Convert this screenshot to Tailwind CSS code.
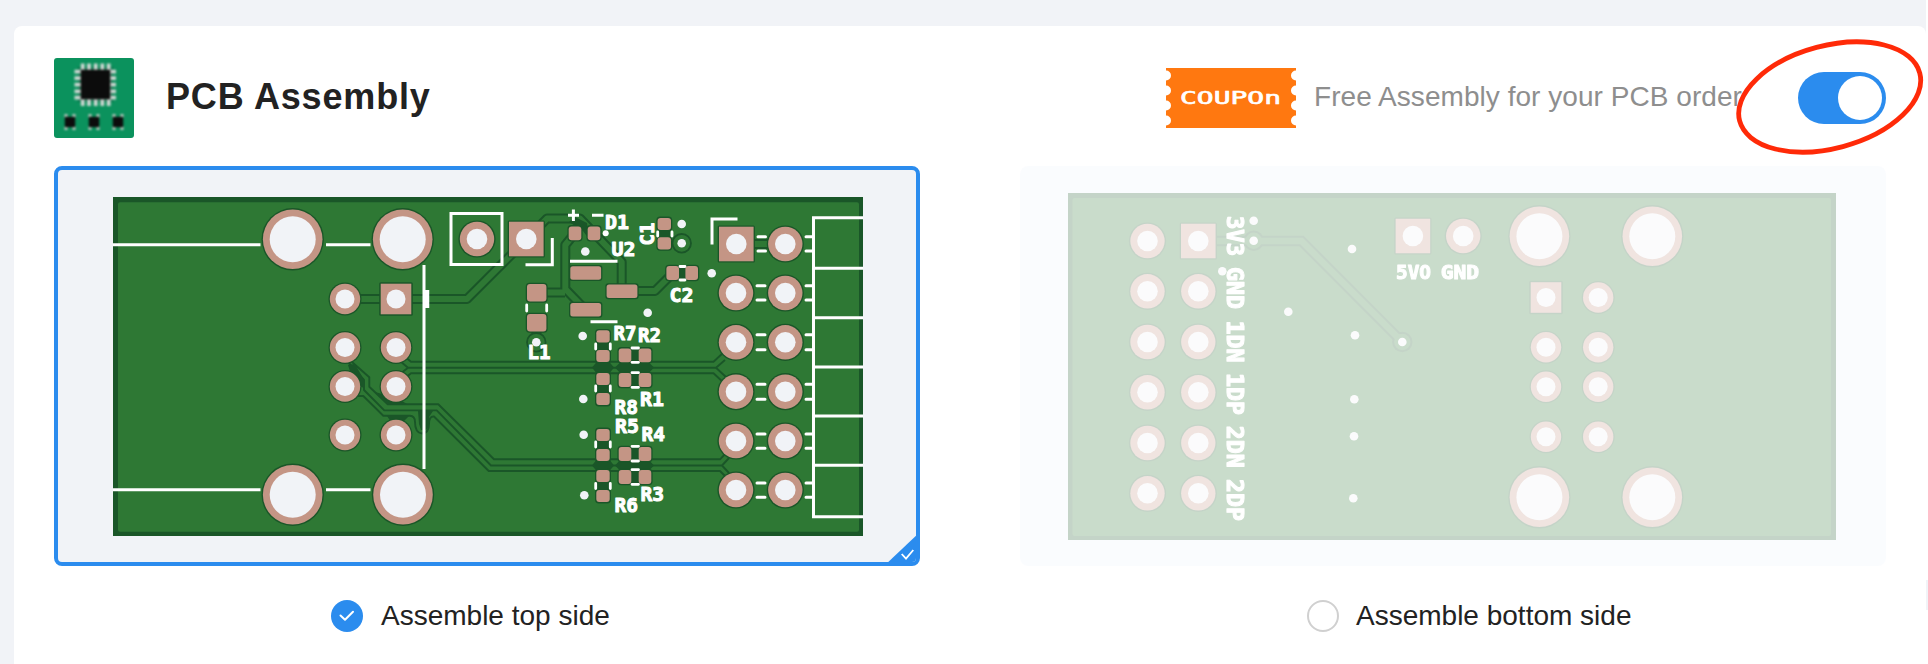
<!DOCTYPE html>
<html lang="en">
<head>
<meta charset="utf-8">
<title>PCB Assembly</title>
<script src="https://cdn.jsdelivr.net/npm/@tailwindcss/browser@4"></script>
</head>
<body class="relative h-[664px] overflow-hidden bg-[#f1f3f7] pt-[26px] pr-[2px] pl-[14px] font-['Liberation_Sans',Arial,sans-serif] text-[#222]">
<svg class="absolute size-0" aria-hidden="true">
  <defs>
    <g id="big"><circle r="31.2" fill="#1a5628"/><circle r="29.8" fill="#c49585"/><circle r="23" fill="#f1f3f7"/></g>
    <g id="mid"><circle r="18.6" fill="#1a5628"/><circle r="17.2" fill="#c49585"/><circle r="10.3" fill="#f1f3f7"/></g>
    <g id="midsq"><rect x="-18.6" y="-18.6" width="37.2" height="37.2" rx="1.5" fill="#1a5628"/><rect x="-17.3" y="-17.3" width="34.6" height="34.6" fill="#c49585"/><circle r="10.3" fill="#f1f3f7"/></g>
    <g id="small"><circle r="16.5" fill="#1a5628"/><circle r="15.2" fill="#c49585"/><circle r="9.5" fill="#f1f3f7"/></g>
    <g id="smallsq"><rect x="-16.8" y="-16.8" width="33.6" height="33.6" rx="1.5" fill="#1a5628"/><rect x="-15.3" y="-15.3" width="30.6" height="30.6" fill="#c49585"/><circle r="9.5" fill="#f1f3f7"/></g>
    <g id="via"><circle r="4.3" fill="#f1f3f7"/></g>
    <g id="viaring"><circle r="9.3" fill="#2e7834" stroke="#1a5628" stroke-width="1.8"/><circle r="4.3" fill="#f1f3f7"/></g>
    <g id="smd"><rect x="-8" y="-7.4" width="16" height="14.8" rx="4" fill="#1a5628"/><rect x="-6.7" y="-6.1" width="13.4" height="12.2" rx="3" fill="#c49585"/></g>
    <g id="smdv"><rect x="-7.6" y="-8.2" width="15.2" height="16.4" rx="4" fill="#1a5628"/><rect x="-6.3" y="-6.9" width="12.6" height="13.8" rx="3" fill="#c49585"/></g>
    <g id="ic"><rect x="-16.7" y="-8" width="33.4" height="16" rx="3" fill="#1a5628"/><rect x="-15.4" y="-6.7" width="30.8" height="13.4" rx="2.5" fill="#c49585"/></g>
    <g id="ind"><rect x="-11" y="-10" width="22" height="20" rx="4" fill="#1a5628"/><rect x="-9.7" y="-8.8" width="19.4" height="17.6" rx="3" fill="#c49585"/></g>
    <g id="chip"><path d="M-5.5-8h3v4h-3zM2.5-8h3v4h-3zM-5.5 4h3v4h-3zM2.5 4h3v4h-3z" fill="#b9c7bf"/><rect x="-5.2" y="-5.2" width="10.4" height="10.4" fill="#0c0c0c"/></g>
  </defs>
</svg>
<div class="absolute top-0 right-0 h-full w-[2px] bg-white pt-[580px]"><div class="h-[30px] bg-[#f1f3f7]"></div></div>

<main class="h-[660px] rounded-lg bg-white px-[40px] pt-[32px]">
  <header class="flex h-20 items-center">
    <svg class="size-20 shrink-0 rounded-[3px] bg-[#0b925d]" viewBox="54 58 80 80">
      <g class="blur-[0.8px]">
        <rect x="78" y="67" width="35" height="35" fill="#087048"/>
        <path d="M82.700 63.500V106M89 63.500V106M95.700 63.500V106M102.300 63.500V106M108.700 63.500V106M74.500 71.700H116M74.500 78.200H116M74.500 84.700H116M74.500 91.300H116M74.500 97.700H116" stroke="#cdd6d1" stroke-width="3.800" fill="none"/>
        <rect x="80.700" y="69.700" width="29.600" height="29.600" fill="#0c0c0c"/>
        <use href="#chip" x="70" y="122"/><use href="#chip" x="94" y="122"/><use href="#chip" x="118" y="122"/>
      </g>
    </svg>
    <h1 class="ml-[32px] pb-[2px] text-[36px] leading-none font-bold tracking-[0.82px]">PCB Assembly</h1>
    <svg class="ml-auto h-[60px] w-[130px] shrink-0" viewBox="0 0 130 60">
      <rect width="130" height="60" fill="#ff7810"/>
      <g fill="#fff"><circle cx="0" cy="7.500" r="5"/><circle cx="0" cy="22.500" r="5"/><circle cx="0" cy="37.500" r="5"/><circle cx="0" cy="52.500" r="5"/><circle cx="130" cy="7.500" r="5"/><circle cx="130" cy="22.500" r="5"/><circle cx="130" cy="37.500" r="5"/><circle cx="130" cy="52.500" r="5"/></g>
      <text x="14" y="35.800" textLength="101" lengthAdjust="spacingAndGlyphs" class="font-['DejaVu_Sans_Mono',monospace] text-[17px]" fill="#fff" stroke="#fff" stroke-width=".6">COUPOn</text>
    </svg>
    <p class="ml-[18px] w-[428px] pb-[2px] text-[28px] leading-none tracking-[0.05px] whitespace-nowrap text-[#8e8e8e]">Free Assembly for your PCB order</p>
    <div class="relative ml-[56px] flex h-[52px] w-[88px] shrink-0 items-center justify-end rounded-full bg-[#2b8cee] pr-1">
      <span class="size-11 rounded-full bg-white"></span>
      <svg class="absolute -top-[38px] -left-[68px] h-[126px] w-[198px]" viewBox="1730 34 198 126"><ellipse cx="1829.700" cy="97" rx="93.200" ry="51.300" transform="rotate(-14.900 1829.700 97)" fill="none" stroke="#ff2a08" stroke-width="4.800"/></svg>
    </div>
  </header>

  <div class="mt-[28px] flex gap-[100px]">
    <section class="w-[866px]">
      <div class="relative h-[400px] overflow-hidden rounded-lg border-4 border-[#2b8cee] bg-[#f1f3f7]">
        <svg class="block h-[392px] w-[858px]" viewBox="58 170 858 392">
          <rect x="113" y="197" width="750" height="339" fill="#1a5628"/>
          <rect x="118" y="202.300" width="741" height="329.500" rx="2" fill="#2e7834"/>
          <g fill="none" stroke-linejoin="round">
            <g stroke="#1a5628" stroke-width="10">
              <path d="M345 299H467L526 240L547 218.500H580L621.700 262V291"/><path d="M575 233L565.300 245V289L585.700 310M536 292.500H565"/><path d="M622 291H655L673 273"/><path d="M736 244H785"/><path d="M536.500 323V342"/>
            </g>
            <g stroke="#2e7834" stroke-width="6">
              <path d="M345 299H467L526 240L547 218.500H580L621.700 262V291"/><path d="M575 233L565.300 245V289L585.700 310M536 292.500H565"/><path d="M622 291H655L673 273"/><path d="M736 244H785"/><path d="M536.500 323V342"/>
            </g>
            <g stroke="#1a5628" stroke-width="1.900">
              <path d="M403 355L411 361.700H713.500L724 352M400 361L408 367.700H716L725 360M716 367.700L726 377M403 380L411 373.300H713.500L724 383M400 374L408 367.700"/>
              <path d="M351.700 361.700L369.300 377.300V386.700L387.700 404.300H438.300L494 459.300H720L729 450"/>
              <path d="M348 362L364 380V390L384.300 410.400H436.700L491 465.500H722L729 458M722 465.500L729 473"/>
              <path d="M358 396H363.300L383.300 415.700H410Q415 416 415 422Q415 433 422 433.500Q429 433 429 424Q429 416 434 416.500L488.700 471H720L729 480"/>
            </g>
          </g>
          <path d="M348 365l7-1 9 16v8l-10-4zM375 392l12 12h20l-10-6zM387 416h22l-6 6h-12zM418 411h15l-4 6v10l-3 3h-5l-2-6zM597 361.500h12l5 6-5 6.500h-12l-5-6.500zM621 361.500h27l6 6-6 6.500h-27l-6-6.500zM597 459h12l5 6.500-5 6h-12l-5-6zM621 459h27l6 6.500-6 6h-27l-6-6zM630 349h10v12h-10zM630 374h10v12h-10zM630 448h10v12h-10zM630 471h10v12h-10zM597 340h12v12h-12zM597 383h12v12h-12zM597 439h12v12h-12zM597 480h12v12h-12zM658 230h12v8h-12zM678 267h9v12h-9zM569 222l6-5 12 6 2 16-6-8z" fill="#1a5628"/>
          <use href="#big" x="292.700" y="239.300"/><use href="#big" x="402.700" y="239.300"/><use href="#big" x="292.700" y="494.700"/><use href="#big" x="403" y="494.700"/>
          <use href="#small" x="345" y="299"/><use href="#smallsq" x="396" y="299"/><use href="#small" x="345" y="347.500"/><use href="#small" x="396" y="347.500"/><use href="#small" x="345" y="386.500"/><use href="#small" x="396" y="386.500"/><use href="#small" x="345" y="435"/><use href="#small" x="396" y="435"/>
          <use href="#mid" x="477" y="239"/><use href="#midsq" x="526.300" y="239"/>
          <use href="#midsq" x="736.300" y="244"/><use href="#mid" x="785.300" y="244"/>
          <use href="#mid" x="736" y="293"/><use href="#mid" x="785.300" y="293"/>
          <use href="#mid" x="736" y="342.300"/><use href="#mid" x="785.300" y="342.300"/>
          <use href="#mid" x="736" y="391.700"/><use href="#mid" x="785.300" y="391.700"/>
          <use href="#mid" x="736" y="441"/><use href="#mid" x="785.300" y="441"/>
          <use href="#mid" x="736" y="490"/><use href="#mid" x="785.300" y="490"/>
          <use href="#smdv" x="575" y="233.300"/><use href="#smdv" x="594" y="233.300"/>
          <use href="#smd" x="664.300" y="224"/><use href="#smd" x="664.300" y="243.300"/>
          <use href="#smdv" x="672.700" y="273"/><use href="#smdv" x="691.700" y="273"/>
          <use href="#ic" x="585.700" y="273"/><use href="#ic" x="585.700" y="309.700"/><use href="#ic" x="622" y="291.300"/>
          <use href="#viaring" x="536.300" y="342.300"/>
          <use href="#ind" x="536.700" y="292.700"/><use href="#ind" x="536.700" y="322.700"/>
          <use href="#smd" x="603" y="336.300"/><use href="#smd" x="603" y="356"/><use href="#smd" x="603" y="379"/><use href="#smd" x="603" y="399"/><use href="#smd" x="603" y="435"/><use href="#smd" x="603" y="455"/><use href="#smd" x="603" y="476"/><use href="#smd" x="603" y="496"/>
          <use href="#smdv" x="625" y="355.300"/><use href="#smdv" x="645" y="355.300"/><use href="#smdv" x="625" y="380"/><use href="#smdv" x="645" y="380"/><use href="#smdv" x="625" y="454"/><use href="#smdv" x="645" y="454"/><use href="#smdv" x="625" y="477"/><use href="#smdv" x="645" y="477"/>
          <use href="#via" x="681.700" y="224"/><use href="#viaring" x="681.700" y="243.300"/><use href="#via" x="585.300" y="251.500"/><use href="#via" x="647.700" y="312.700"/><use href="#via" x="582.700" y="336"/><use href="#via" x="711.700" y="273.300"/><use href="#via" x="583.300" y="399"/><use href="#via" x="583.700" y="434.700"/><use href="#via" x="584.300" y="495.300"/><circle cx="605.700" cy="233.300" r="3" fill="#fff"/>
          <g fill="none" stroke="#fff" stroke-width="3">
            <path d="M113 244.700H260.500M326 244.700H370.500M113 489.700H260.500M326 489.700H370.500M424 265V469"/>
            <path d="M427 290V308" stroke-width="4.500"/>
            <path d="M451 213.500H502V264.500H451ZM552.300 238V264.700H525.500M712 244.500V219H737.500"/>
            <path d="M813.500 217.700V516.700M812 217.700H863M812 268.300H863M812 317.700H863M812 367H863M812 416H863M812 465.300H863M812 516.700H863"/>
            <path d="M570 261.300H617.500M590.500 321.700H617.500M568 215.300H579M573.400 209.500V221M592 215.300H603.500"/>
            <path stroke-linecap="round" d="M758 236.700h7.500M758 251h7.500M757 285.700h8M757 300h8M757 334.700h8M757 349.700h8M757 384.300h8M757 399.300h8M757 434h8M757 448.300h8M757 483h8M757 497.300h8M806 236.700h6M806 251h6M806 285.700h6M806 300h6M806 334.700h6M806 349.700h6M806 384.300h6M806 399.300h6M806 434h6M806 448.300h6M806 483h6M806 497.300h6"/>
            <path stroke-linecap="round" stroke-width="2.800" d="M526.700 305v6M546.700 305v6M657.700 232v4M672 232v4M680 266.500h5M680 280h5M595.700 344v5M610.300 344v5M595.700 386v5M610.300 386v5M595.700 442v5M610.300 442v5M595.700 483.500v5M610.300 483.500v5M632 348h6.500M632 362.300h6.500M632 372.700h6.500M632 387.300h6.500M632 446.300h6.500M632 461h6.500M632 469.700h6.500M632 484.300h6.500"/>
          </g>
          <g fill="#fff" stroke="#fff" stroke-width="1" stroke-linejoin="round" class="font-['DejaVu_Sans_Mono',monospace] text-[20px] font-bold">
            <text x="605" y="229.300" textLength="24" lengthAdjust="spacingAndGlyphs">D1</text>
            <text x="611.500" y="255.500" textLength="24" lengthAdjust="spacingAndGlyphs">U2</text>
            <text transform="translate(654 245.500) rotate(-90)" textLength="23" lengthAdjust="spacingAndGlyphs">C1</text>
            <text x="669.500" y="302.300" textLength="24" lengthAdjust="spacingAndGlyphs">C2</text>
            <text x="527.500" y="359" textLength="23" lengthAdjust="spacingAndGlyphs">L1</text>
            <text x="613.500" y="339.700" textLength="23" lengthAdjust="spacingAndGlyphs">R7</text>
            <text x="638" y="342.200" textLength="23" lengthAdjust="spacingAndGlyphs">R2</text>
            <text x="614.500" y="414" textLength="23.500" lengthAdjust="spacingAndGlyphs">R8</text>
            <text x="640" y="406" textLength="24" lengthAdjust="spacingAndGlyphs">R1</text>
            <text x="615" y="433" textLength="24" lengthAdjust="spacingAndGlyphs">R5</text>
            <text x="641.500" y="440.700" textLength="23.500" lengthAdjust="spacingAndGlyphs">R4</text>
            <text x="640.500" y="501.300" textLength="23.500" lengthAdjust="spacingAndGlyphs">R3</text>
            <text x="614.500" y="511.700" textLength="23.500" lengthAdjust="spacingAndGlyphs">R6</text>
          </g>
        </svg>
        <svg class="absolute -right-1 -bottom-1 h-[34px] w-[36px]" viewBox="884 532 36 34"><path d="M920 532V566H884Z" fill="#2b8cee"/><path d="M901.700 554L906 558.700L913.300 550" fill="none" stroke="#fff" stroke-width="1.800"/></svg>
      </div>
      <div class="mt-[34px] flex h-8 items-center pl-[277px]">
        <svg class="size-8" viewBox="0 0 32 32"><circle cx="16" cy="16" r="16" fill="#2b8cee"/><path d="M9.500 15.500L14 19.800L22 11.800" fill="none" stroke="#fff" stroke-width="2" stroke-linecap="round" stroke-linejoin="round"/></svg>
        <span class="ml-[18px] text-[28px] leading-none">Assemble top side</span>
      </div>
    </section>

    <section class="w-[866px]">
      <div class="h-[400px] rounded-lg bg-[#eff4fc] opacity-25">
        <svg class="block h-[400px] w-[866px]" viewBox="1020 166 866 400">
          <rect x="1068" y="193" width="768" height="347" fill="#1a5628"/>
          <rect x="1072.500" y="198" width="758.500" height="338" rx="2" fill="#2e7834"/>
          <circle cx="1253.700" cy="240.700" r="10.200" fill="#1a5628"/><circle cx="1402.300" cy="342" r="10.200" fill="#1a5628"/>
          <path d="M1198 241H1301.500L1402.300 342" fill="none" stroke="#1a5628" stroke-width="10.400"/>
          <circle cx="1253.700" cy="240.700" r="8.200" fill="#2e7834"/><circle cx="1402.300" cy="342" r="8.200" fill="#2e7834"/>
          <path d="M1198 241H1301.500L1402.300 342" fill="none" stroke="#2e7834" stroke-width="6.400"/>
          <use href="#mid" x="1147.500" y="241"/><use href="#midsq" x="1198.300" y="241"/>
          <use href="#mid" x="1147.500" y="291.300"/><use href="#mid" x="1198.300" y="291.300"/>
          <use href="#mid" x="1147.500" y="342"/><use href="#mid" x="1198.300" y="342"/>
          <use href="#mid" x="1147.500" y="392.300"/><use href="#mid" x="1198.300" y="392.300"/>
          <use href="#mid" x="1147.500" y="443"/><use href="#mid" x="1198.300" y="443"/>
          <use href="#mid" x="1147.500" y="493.300"/><use href="#mid" x="1198.300" y="493.300"/>
          <use href="#midsq" x="1412.900" y="236"/><use href="#mid" x="1463.200" y="236"/>
          <use href="#big" x="1539.400" y="236.300"/><use href="#big" x="1652.300" y="236.300"/><use href="#big" x="1539.400" y="497.300"/><use href="#big" x="1652.300" y="497.300"/>
          <use href="#smallsq" x="1546" y="297.500"/><use href="#small" x="1598.200" y="297.500"/><use href="#small" x="1546" y="347.300"/><use href="#small" x="1598.200" y="347.300"/><use href="#small" x="1546" y="386.700"/><use href="#small" x="1598.200" y="386.700"/><use href="#small" x="1546" y="436.700"/><use href="#small" x="1598.200" y="436.700"/>
          <use href="#via" x="1253.700" y="220.700"/><use href="#via" x="1253.700" y="240.700"/><use href="#via" x="1222.300" y="271.300"/><use href="#via" x="1288.300" y="311.700"/><use href="#via" x="1352" y="249"/><use href="#via" x="1355" y="335.300"/><use href="#via" x="1354.300" y="399.300"/><use href="#via" x="1354" y="436.300"/><use href="#via" x="1353.300" y="498.300"/><use href="#via" x="1402.300" y="342"/>
          <g fill="#fff" stroke="#fff" stroke-width="1.100" stroke-linejoin="round" class="font-['DejaVu_Sans_Mono',monospace] text-[23px] font-bold">
            <text transform="translate(1227 216) rotate(90)" textLength="40" lengthAdjust="spacingAndGlyphs">3V3</text>
            <text transform="translate(1227 267) rotate(90)" textLength="42" lengthAdjust="spacingAndGlyphs">GND</text>
            <text transform="translate(1227 320.500) rotate(90)" textLength="42" lengthAdjust="spacingAndGlyphs">1DN</text>
            <text transform="translate(1227 373) rotate(90)" textLength="42" lengthAdjust="spacingAndGlyphs">1DP</text>
            <text transform="translate(1227 425.700) rotate(90)" textLength="42" lengthAdjust="spacingAndGlyphs">2DN</text>
            <text transform="translate(1227 479) rotate(90)" textLength="42" lengthAdjust="spacingAndGlyphs">2DP</text>
            <text x="1396" y="279" textLength="35" lengthAdjust="spacingAndGlyphs" class="text-[20px]">5VO</text>
            <text x="1440.700" y="279" textLength="38.500" lengthAdjust="spacingAndGlyphs" class="text-[20px]">GND</text>
          </g>
        </svg>
      </div>
      <div class="mt-[34px] flex h-8 items-center pl-[287px]">
        <span class="size-8 rounded-full border-2 border-[#d0d0d0]"></span>
        <span class="ml-[17px] text-[28px] leading-none">Assemble bottom side</span>
      </div>
    </section>
  </div>
</main>
</body>
</html>
